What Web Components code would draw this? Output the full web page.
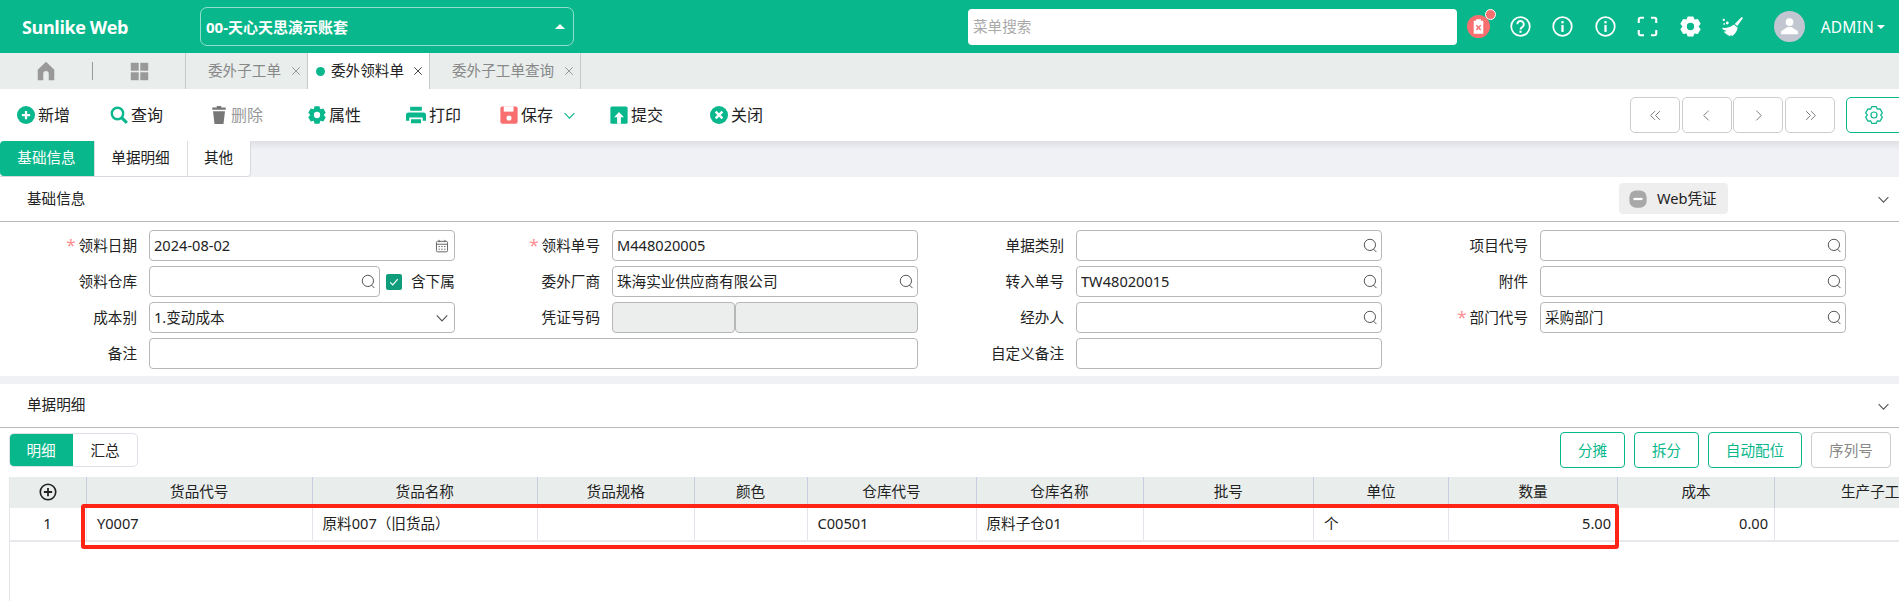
<!DOCTYPE html>
<html lang="zh">
<head>
<meta charset="utf-8">
<title>Sunlike Web</title>
<style>
  html, body { margin: 0; background: #fff; }
  body { width: 1899px; height: 601px; overflow: hidden; font: 15px/20px "Noto Sans", "Noto Sans CJK SC", sans-serif; color: #222; }
</style>
</head>
<body>
<app-shell>
  <app-header slot="header"></app-header>

  <nav-bar>
    <nav-tab>委外子工单</nav-tab>
    <nav-tab active>委外领料单</nav-tab>
    <nav-tab style="width:152px">委外子工单查询</nav-tab>
  </nav-bar>

  <tool-bar>
    <tool-btn icon="add" style="width:93px">新增</tool-btn>
    <tool-btn icon="find" style="width:100px">查询</tool-btn>
    <tool-btn icon="trash" disabled style="width:98px">删除</tool-btn>
    <tool-btn icon="cog" style="width:98px">属性</tool-btn>
    <tool-btn icon="print" style="width:94px">打印</tool-btn>
    <tool-btn icon="save" more style="width:110px">保存</tool-btn>
    <tool-btn icon="submit" style="width:100px">提交</tool-btn>
    <tool-btn icon="close" style="width:100px">关闭</tool-btn>
  </tool-bar>

  <page-tabs>
    <page-tab active style="width:94px">基础信息</page-tab>
    <page-tab style="width:93px">单据明细</page-tab>
    <page-tab style="width:63px">其他</page-tab>
  </page-tabs>

  <form-panel heading="基础信息">
    <voucher-btn slot="extra">Web凭证</voucher-btn>
    <form-grid>
      <form-label req>领料日期</form-label><form-input icon="calendar">2024-08-02</form-input>
      <form-label req>领料单号</form-label><form-input>M448020005</form-input>
      <form-label>单据类别</form-label><form-input icon="lookup"></form-input>
      <form-label>项目代号</form-label><form-input icon="lookup"></form-input>

      <form-label>领料仓库</form-label>
      <form-row><form-input icon="lookup" style="width:231px"></form-input><check-box>含下属</check-box></form-row>
      <form-label>委外厂商</form-label><form-input icon="lookup">珠海实业供应商有限公司</form-input>
      <form-label>转入单号</form-label><form-input icon="lookup">TW48020015</form-input>
      <form-label>附件</form-label><form-input icon="lookup"></form-input>

      <form-label>成本别</form-label><form-input icon="chevron">1.变动成本</form-input>
      <form-label>凭证号码</form-label>
      <form-row><form-input disabled style="width:123px"></form-input><form-input disabled style="flex:1"></form-input></form-row>
      <form-label>经办人</form-label><form-input icon="lookup"></form-input>
      <form-label req>部门代号</form-label><form-input icon="lookup">采购部门</form-input>

      <form-label>备注</form-label><form-input style="grid-column:span 3"></form-input>
      <form-label>自定义备注</form-label><form-input></form-input>
    </form-grid>
  </form-panel>

  <form-panel heading="单据明细" flat>
    <detail-bar></detail-bar>
    <data-grid></data-grid>
  </form-panel>
</app-shell>

<script>
(function () {
  const GREEN = '#09b78c';
  const CORAL = '#f96f6f';

  // kugghjul med sex tänder, hålet ritas med evenodd
  function gearPath(cx, cy, ro, ri, hole) {
    let d = '';
    for (let i = 0; i < 6; i++) {
      const a = i * Math.PI / 3 - Math.PI / 2;
      const pts = [[a - 0.52, ri], [a - 0.27, ro], [a + 0.27, ro], [a + 0.52, ri]];
      pts.forEach((p, j) => {
        const x = (cx + Math.cos(p[0]) * p[1]).toFixed(2);
        const y = (cy + Math.sin(p[0]) * p[1]).toFixed(2);
        d += (i === 0 && j === 0 ? 'M' : 'L') + x + ' ' + y + ' ';
      });
    }
    d += 'Z ';
    if (hole) d += `M${cx - hole} ${cy} a${hole} ${hole} 0 1 0 ${hole * 2} 0 a${hole} ${hole} 0 1 0 ${-hole * 2} 0 Z`;
    return d;
  }

  const ICONS = {
    home: `<path fill="#999" d="M12 2 3 10.5V22h6v-7a3 3 0 0 1 6 0v7h6V10.5Z"/>`,
    apps: `<g fill="#999"><rect x="1" y="1" width="10" height="10"/><rect x="13" y="1" width="10" height="10"/><rect x="1" y="13" width="10" height="10"/><rect x="13" y="13" width="10" height="10"/></g>`,
    x: `<path d="M3 3 21 21M21 3 3 21" stroke="currentColor" stroke-width="2" fill="none"/>`,
    add: `<circle cx="12" cy="12" r="12" fill="${GREEN}"/><path d="M12 6.5v11M6.5 12h11" stroke="#fff" stroke-width="3"/>`,
    find: `<circle cx="10" cy="10" r="7.6" fill="none" stroke="${GREEN}" stroke-width="3.2"/><path d="M15.5 15.5 22.5 22.5" stroke="${GREEN}" stroke-width="4"/>`,
    trash: `<path fill="#777" d="M9 0h6v2h6v3H3V2h6ZM4 7h16l-2 17H6Z"/>`,
    cog: `<path fill="${GREEN}" fill-rule="evenodd" d="${gearPath(12, 12, 12, 9, 4.2)}"/>`,
    print: `<path fill="${GREEN}" fill-rule="evenodd" d="M5 2h14v5H5ZM3 9h18a3 3 0 0 1 3 3v7h-4v-4H4v4H0v-7a3 3 0 0 1 3-3ZM6 17h12v5H6Z"/>`,
    save: `<rect x="0.5" y="0.5" width="23" height="23" rx="2.5" fill="${CORAL}"/><rect x="5" y="0.5" width="13" height="7" fill="#fff"/><circle cx="12" cy="16" r="3.4" fill="#fff"/>`,
    submit: `<rect x="0.5" y="0.5" width="23" height="23" rx="2" fill="${GREEN}"/><path fill="#fff" d="M12 8 18.5 15H14.5V23.5H9.5V15H5.5Z"/>`,
    close: `<circle cx="12" cy="12" r="12" fill="${GREEN}"/><path d="M7.5 7.5 16.5 16.5M16.5 7.5 7.5 16.5" stroke="#fff" stroke-width="3.2"/>`,
    lookup: `<circle cx="11" cy="11" r="9" fill="none" stroke="#555" stroke-width="1.6"/><path d="M16.5 17.5 21.5 22.5" stroke="#555" stroke-width="1.6"/>`,
    calendar: `<g fill="none" stroke="#666" stroke-width="1.7"><rect x="2.5" y="4" width="19" height="18" rx="2"/><path d="M2.5 9h19M7 1.5v4M17 1.5v4"/><path d="M6 13h2.4M10.8 13h2.4M15.6 13h2.4M6 17.5h2.4M10.8 17.5h2.4M15.6 17.5h2.4"/></g>`,
    chevron: `<path d="M3 7.5 12 17 21 7.5" fill="none" stroke="currentColor" stroke-width="2"/>`,
    first: `<path d="M11 4 3 12 11 20M20 4 12 12 20 20" fill="none" stroke="#777" stroke-width="1.8"/>`,
    prev: `<path d="M16 3 7 12 16 21" fill="none" stroke="#777" stroke-width="1.8"/>`,
    next: `<path d="M8 3 17 12 8 21" fill="none" stroke="#777" stroke-width="1.8"/>`,
    last: `<path d="M4 4 12 12 4 20M13 4 21 12 13 20" fill="none" stroke="#777" stroke-width="1.8"/>`,
    cogline: `<path fill="none" stroke="${GREEN}" stroke-width="1.6" stroke-linejoin="round" d="${gearPath(12, 12, 11.5, 9, 0)}"/><circle cx="12" cy="12" r="4" fill="none" stroke="${GREEN}" stroke-width="1.6"/>`,
    minus: `<rect x="0.5" y="0.5" width="23" height="23" rx="9" fill="#a8a8a8"/><rect x="6" y="10.5" width="12" height="3" fill="#fff"/>`,
    plusline: `<circle cx="12" cy="12" r="10.3" fill="none" stroke="#222" stroke-width="2.2"/><path d="M12 6.5v11M6.5 12h11" stroke="#222" stroke-width="2.4"/>`,
    alert: `<circle cx="12" cy="12" r="12" fill="${CORAL}"/><path fill="#fff" d="M7 6h2.5V4.5h5V6H17v13.5H7Z"/><path d="M9.7 10.7 14.3 15.6M14.3 10.7 9.7 15.6" stroke="${CORAL}" stroke-width="1.5"/>`,
    help: `<g fill="none" stroke="#fff" stroke-width="2"><circle cx="12" cy="12" r="10.6"/><path stroke-width="2.2" d="M8.4 9.4a3.7 3.7 0 1 1 5.8 3c-1.4 1-2.2 1.5-2.2 3"/></g><rect x="10.8" y="16.8" width="2.4" height="2.4" fill="#fff"/>`,
    info: `<circle cx="12" cy="12" r="10.6" fill="none" stroke="#fff" stroke-width="2"/><rect x="10.7" y="10.2" width="2.6" height="8" fill="#fff"/><rect x="10.7" y="5.8" width="2.6" height="2.6" fill="#fff"/>`,
    expand: `<path d="M8 2H4a2 2 0 0 0-2 2v4M16 2h4a2 2 0 0 1 2 2v4M8 22H4a2 2 0 0 1-2-2v-4M16 22h4a2 2 0 0 0 2-2v-4" fill="none" stroke="#fff" stroke-width="2.4"/>`,
    cogwhite: `<path fill="#fff" fill-rule="evenodd" d="${gearPath(12, 12, 12, 9.2, 4.2)}"/>`,
    broom: `<path fill="#fff" d="M22.5 1 24 2.4 17.5 11.5 14.5 9ZM13.5 9.8 18 13.4C17 18 14 21.5 11.5 23L10 21.2 9.5 23C7 22.5 4 20.5 2 18L5.5 17 1 15.5C0.5 14.5 0.5 14 0.5 13.5 5 14 10 13 13.5 9.8Z"/><circle cx="2" cy="4.5" r="1.3" fill="#fff"/><circle cx="6" cy="8" r="1.6" fill="#fff"/><circle cx="2.5" cy="9" r="1" fill="#fff"/>`,
    user: `<circle cx="12" cy="12" r="12" fill="#c2c6d0"/><circle cx="12" cy="8.6" r="3" fill="#fff"/><path fill="#fff" d="M10.5 12.4h3L18.5 15.6V18H5.5V15.6Z"/>`
  };

  // Hjälpklass: varje element skriver sin egen shadow root
  class Base extends HTMLElement {
    constructor() {
      super();
      this.attachShadow({mode: "open"});
    }
    connectedCallback() {
      this.shadowRoot.innerHTML = this.render();
    }
  }

  function define(name, render) {
    customElements.define(name, class extends Base {
      render() { return render(this); }
    });
  }

  define('app-icon', (el) => {
    const size = el.getAttribute('size') || 16;
    return `<style>:host{display:inline-flex;flex:none;width:${size}px;height:${size}px}svg{display:block;width:100%;height:100%}</style>
      <svg viewBox="0 0 24 24">${ICONS[el.getAttribute('name')] || ''}</svg>`;
  });

  define('app-shell', () => `<style>:host{display:flex;flex-direction:column;width:1899px;height:601px;overflow:hidden}</style>
    <slot name="header"></slot><slot></slot>`);

  define('app-header', () => `<style>
      :host{display:flex;align-items:center;height:53px;flex:none;background:${GREEN};color:#fff;padding-left:22px}
      .logo{width:178px;font:700 18px/24px "Open Sans","Noto Sans",sans-serif;letter-spacing:-.4px;white-space:nowrap}
      .account{box-sizing:border-box;width:374px;height:39px;border:1px solid rgba(255,255,255,.55);border-radius:7px;display:flex;align-items:center;justify-content:space-between;padding:0 8px 0 5px;font-weight:700;font-size:15px}
      .caret{width:0;height:0;border:5px solid transparent;border-top:0;border-bottom:5px solid #fff}
      .search{box-sizing:border-box;margin-left:394px;width:489px;height:36px;background:#fff;border-radius:4px;color:#aaa;font-size:14.6px;line-height:34px;padding-left:5px}
      .icons{display:grid;grid-auto-flow:column;grid-auto-columns:42.4px;justify-items:center;align-items:center}
      .bell{position:relative;display:flex}
      .dot{position:absolute;top:-6px;right:-6px;width:9px;height:9px;border-radius:50%;background:${CORAL};border:1px solid #fff}
      .user{margin-left:20px;display:flex;align-items:center;font-size:15.5px;letter-spacing:.2px}
      .name{margin-left:16px}
      .small{width:0;height:0;border:4px solid transparent;border-bottom:0;border-top:4px solid #fff;margin-left:3px}
    </style>
    <div class="logo">Sunlike Web</div>
    <div class="account"><span>00-天心天思演示账套</span><i class="caret"></i></div>
    <div class="search">菜单搜索</div>
    <div class="icons">
      <span class="bell"><app-icon name="alert" size="23"></app-icon><i class="dot"></i></span>
      <app-icon name="help" size="21"></app-icon>
      <app-icon name="info" size="21"></app-icon>
      <app-icon name="info" size="21"></app-icon>
      <app-icon name="expand" size="21"></app-icon>
      <app-icon name="cogwhite" size="21"></app-icon>
      <app-icon name="broom" size="21"></app-icon>
    </div>
    <div class="user"><app-icon name="user" size="31"></app-icon><span class="name">ADMIN</span><i class="small"></i></div>`);

  define('nav-bar', () => `<style>
      :host{display:flex;height:36px;flex:none;background:#e9edec}
      .fixed{width:185px;display:flex;align-items:center;flex:none}
      .fixed app-icon:first-child{margin-left:35px}
      .sep{width:1px;height:18px;background:#999;margin:0 37px 0 35px}
    </style>
    <div class="fixed"><app-icon name="home" size="22"></app-icon><i class="sep"></i><app-icon name="apps" size="19"></app-icon></div>
    <slot></slot>`);

  define('nav-tab', (el) => {
    const active = el.hasAttribute('active');
    return `<style>
      :host{box-sizing:border-box;display:flex;align-items:center;width:122px;height:36px;border-left:1px solid #c6c9c9;${active ? 'background:#fff;color:#222;' : 'color:#888;'}font-size:14.6px;padding:0 0 2px ${active ? 8 : 22}px}
      :host(:last-of-type){border-right:1px solid #c6c9c9}
      .dot{width:9px;height:9px;border-radius:50%;background:${GREEN};margin:2px 6px 0 0}
      app-icon{margin:2px 6px 0 auto}
    </style>${active ? '<i class="dot"></i>' : ''}<slot></slot><app-icon name="x" size="10"></app-icon>`;
  });

  define('tool-bar', () => `<style>
      :host{display:flex;align-items:center;height:52px;flex:none;background:#fff;padding-left:17px;box-sizing:border-box}
      .pager{position:absolute;left:1630px;display:flex;gap:1.7px}
      .pager b{box-sizing:border-box;width:50px;height:36px;border:1px solid #ccc;border-radius:5px;display:flex;align-items:center;justify-content:center}
      .set{position:absolute;left:1846px;box-sizing:border-box;width:60px;height:36px;border:1px solid ${GREEN};border-radius:5px;display:flex;align-items:center;padding-left:18px}
    </style>
    <slot></slot>
    <div class="pager"><b><app-icon name="first" size="13"></app-icon></b><b><app-icon name="prev" size="13"></app-icon></b><b><app-icon name="next" size="13"></app-icon></b><b><app-icon name="last" size="13"></app-icon></b></div>
    <div class="set"><app-icon name="cogline" size="18"></app-icon></div>`);

  define('tool-btn', (el) => {
    const more = el.hasAttribute('more');
    const icon = el.getAttribute('icon');
    return `<style>
      :host{display:flex;align-items:center;flex:none;font-size:16px;color:${el.hasAttribute('disabled') ? '#999' : '#222'}}
      .label{margin-left:3px}
      .more{margin-left:10px;color:${GREEN}}
    </style><app-icon name="${icon}" size="${icon === 'print' ? 20 : 18}"></app-icon><span class="label"><slot></slot></span>
    ${more ? '<app-icon class="more" name="chevron" size="13"></app-icon>' : ''}`;
  });

  define('page-tabs', () => `<style>
      :host{display:flex;height:36px;flex:none;background:linear-gradient(#dfe0e5,#f0f1f5 9px)}
      .wrap{display:flex;height:35px;background:#fff;border-bottom:1px solid #d8d9e0;border-right:1px solid #d8d9e0;border-radius:0 0 4px 0}
    </style><div class="wrap"><slot></slot></div>`);

  define('page-tab', (el) => {
    const active = el.hasAttribute('active');
    return `<style>
      :host{box-sizing:border-box;display:flex;align-items:center;justify-content:center;font-size:14.6px;padding:0 1px 3px 0;${active ? `background:${GREEN};color:#fff;border-radius:4px 0 0 4px;` : 'color:#222;border-left:1px solid #dcdde3;'}}
    </style><slot></slot>`;
  });

  define('form-panel', (el) => `<style>
      :host{display:block;flex:none;background:#fff}
      header{box-sizing:border-box;height:${el.hasAttribute('flat') ? 44 : 45}px;border-bottom:1px solid #b9b9b9;display:flex;align-items:center;padding:0 0 3px 27px;font-size:14.6px;position:relative}
      .extra{position:absolute;left:1619px;top:6px}
      .fold{position:absolute;right:9px;top:16px;color:#555}
      main{display:block}
    </style>
    <header><span>${el.getAttribute('heading')}</span><span class="extra"><slot name="extra"></slot></span><app-icon class="fold" name="chevron" size="13"></app-icon></header>
    <main><slot></slot></main>`);

  define('voucher-btn', () => `<style>
      :host{box-sizing:border-box;display:flex;align-items:center;width:109px;height:31px;background:#eee;border-radius:4px;padding-left:10px;font-size:14.6px}
      span{margin:0 0 2px 10px}
    </style><app-icon name="minus" size="18"></app-icon><span><slot></slot></span>`);

  define('form-grid', () => `<style>
      :host{display:grid;grid-template-columns:149px 306px 157px 306px 158px 306px 158px 306px;grid-auto-rows:31px;row-gap:5px;padding:8px 0 7px;border-bottom:8px solid #f0f1f5}
    </style><slot></slot>`);

  define('form-label', (el) => `<style>
      :host{display:flex;align-items:center;justify-content:flex-end;padding:0 12px 2px 0;font-size:14.6px;color:#222}
      b{color:#ff8e8e;font-weight:400;margin-right:3px;font-size:17px;line-height:14px;padding-top:1px}
    </style>${el.hasAttribute('req') ? '<b>*</b>' : ''}<slot></slot>`);

  define('form-row', () => `<style>:host{display:flex;align-items:center;min-width:0}</style><slot></slot>`);

  define('form-input', (el) => {
    const icon = el.getAttribute('icon');
    const size = icon === 'lookup' ? 15 : 14;
    return `<style>
      :host{box-sizing:border-box;display:flex;align-items:center;height:31px;border:1px solid #b7b7b7;border-radius:4px;padding:0 ${icon === 'lookup' ? 3 : 5}px 0 4px;font-size:14.6px;color:#222;min-width:0;background:${el.hasAttribute('disabled') ? '#eceeed' : '#fff'}}
      span{flex:1;white-space:nowrap;overflow:hidden;margin-bottom:2px}
      app-icon{color:#555}
    </style><span><slot></slot></span>${icon ? `<app-icon name="${icon}" size="${size}"></app-icon>` : ''}`;
  });

  define('check-box', () => `<style>
      :host{display:flex;align-items:center;margin-left:6px;font-size:14.6px}
      i{width:16px;height:16px;border-radius:2px;background:#0f9d7c;margin-right:9px;display:flex;align-items:center;justify-content:center}
      span{margin-bottom:2px}
      svg{width:10px;height:10px}
    </style><i><svg viewBox="0 0 12 12"><path d="M1.5 6.5 4.5 9.5 10.5 2.5" fill="none" stroke="#fff" stroke-width="1.4"/></svg></i><span><slot></slot></span>`);

  define('detail-bar', () => `<style>
      :host{display:flex;align-items:center;height:49px;box-sizing:border-box;padding:0 0 5px 9px}
      .seg{display:flex;height:34px;width:129px;box-sizing:border-box;border:1px solid #dfe1e8;border-radius:5px;overflow:hidden;font-size:14.6px}
      .seg span{display:flex;align-items:center;justify-content:center}
      .seg .on{width:64px;margin:-1px 0 -1px -1px;background:${GREEN};color:#fff}
      .seg .off{flex:1}
      .btns{margin-left:auto;display:flex;gap:9px;margin-right:8px}
      button{box-sizing:border-box;height:36px;border:1px solid ${GREEN};background:#fff;color:${GREEN};border-radius:4px;font:14.6px/20px "Noto Sans","Noto Sans CJK SC",sans-serif;padding:0}
      button[disabled]{border-color:#ccc;color:#888}
    </style>
    <div class="seg"><span class="on">明细</span><span class="off">汇总</span></div>
    <div class="btns">
      <button style="width:65px">分摊</button><button style="width:65px">拆分</button><button style="width:94px">自动配位</button><button disabled style="width:80px">序列号</button>
    </div>`);

  define('data-grid', () => {
    const cols = [78, 225.5, 225.5, 156.5, 113, 169, 167, 170.5, 135, 169, 157, 206];
    const head = ['', '货品代号', '货品名称', '货品规格', '颜色', '仓库代号', '仓库名称', '批号', '单位', '数量', '成本', '生产子工单'];
    const row = [
      ['1', 'c'], ['Y0007'], ['原料007（旧货品）'], [''], [''], ['C00501'], ['原料子仓01'], [''], ['个'], ['5.00', 'r'], ['0.00', 'r'], ['']
    ];
    return `<style>
      :host{display:block;position:relative;height:125px;margin-left:9px;overflow:hidden;border-left:1px solid #e3e5ea;font-size:14.6px}
      table{border-collapse:separate;border-spacing:0;table-layout:fixed;width:${cols.reduce((a, b) => a + b, 0)}px;margin-left:-1px}
      th{box-sizing:border-box;height:31px;padding:0 0 4px;background:#e9edec;font-weight:400;border-right:1px solid #c9cde0;text-align:center;white-space:nowrap;overflow:hidden}
      td{box-sizing:border-box;height:34px;padding:0 6px 2px 10px;border-right:1px solid #e3e5ec;border-bottom:2px solid #e6e8ec;white-space:nowrap;overflow:hidden}
      td.c{text-align:center;padding:0 0 2px}
      td.r{text-align:right}
      .mark{position:absolute;left:71px;top:27px;width:1538px;height:45px;box-sizing:border-box;border:4px solid #ff2415;border-radius:3px}
      app-icon{vertical-align:middle}
    </style>
    <table>
      <colgroup>${cols.map((w) => `<col style="width:${w}px">`).join('')}</colgroup>
      <tr>${head.map((t, i) => `<th>${i === 0 ? '<app-icon name="plusline" size="18"></app-icon>' : t}</th>`).join('')}</tr>
      <tr>${row.map((c) => `<td class="${c[1] || ''}">${c[0]}</td>`).join('')}</tr>
    </table>
    <div class="mark"></div>`;
  });
})();
</script>
</body>
</html>
